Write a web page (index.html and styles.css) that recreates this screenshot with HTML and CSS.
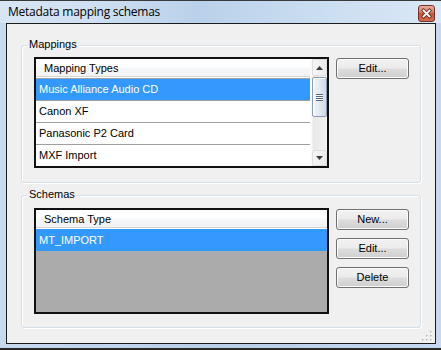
FILE: index.html
```html
<!DOCTYPE html>
<html>
<head>
<meta charset="utf-8">
<link rel="stylesheet" href="styles.css">
</head>
<body>
<div class="window">
  <div class="titlebar">
    <span class="title">Metadata mapping schemas</span>
    <svg class="close" width="17" height="17" viewBox="0 0 17 17">
      <defs>
        <linearGradient id="cg" x1="0" y1="0" x2="0" y2="1">
          <stop offset="0" stop-color="#eab0a2"/>
          <stop offset="0.45" stop-color="#d9785f"/>
          <stop offset="0.5" stop-color="#c9543a"/>
          <stop offset="1" stop-color="#d66e4f"/>
        </linearGradient>
      </defs>
      <rect x="0.5" y="0.5" width="16" height="16" rx="2.5" fill="url(#cg)" stroke="#70352a"/>
      <path d="M5.5 5.5 L11.5 11.5 M11.5 5.5 L5.5 11.5" stroke="#5c2b21" stroke-width="3.4" stroke-linecap="square"/>
      <path d="M5.5 5.5 L11.5 11.5 M11.5 5.5 L5.5 11.5" stroke="#ffffff" stroke-width="1.8" stroke-linecap="square"/>
    </svg>
  </div>
  <div class="frame">
    <div class="client">
      <div class="group g-map">
        <span class="group-label">Mappings</span>
        <div class="lv lv-map">
          <div class="lv-main">
            <div class="lv-head"><div class="lv-header">Mapping Types</div></div>
            <div class="row grid sel">Music Alliance Audio CD</div>
            <div class="row grid">Canon XF</div>
            <div class="row grid">Panasonic P2 Card</div>
            <div class="row grid">MXF Import</div>
          </div>
          <div class="vscroll">
            <div class="sb-btn sb-up">
              <svg width="7" height="4" viewBox="0 0 7 4"><polygon points="3.5,0 7,4 0,4" fill="#3b3b3b"/></svg>
            </div>
            <div class="sb-thumb">
              <div class="grip"></div>
            </div>
            <div class="sb-track"></div>
            <div class="sb-btn sb-down">
              <svg width="7" height="4" viewBox="0 0 7 4"><polygon points="0,0 7,0 3.5,4" fill="#3b3b3b"/></svg>
            </div>
          </div>
        </div>
        <div class="btn-col">
          <button class="btn">Edit...</button>
        </div>
      </div>
      <div class="group g-sch">
        <span class="group-label">Schemas</span>
        <div class="lv lv-sch">
          <div class="lv-main">
            <div class="lv-head"><div class="lv-header">Schema Type</div></div>
            <div class="row sel">MT_IMPORT</div>
          </div>
        </div>
        <div class="btn-col">
          <button class="btn">New...</button>
          <button class="btn">Edit...</button>
          <button class="btn">Delete</button>
        </div>
      </div>
      <svg class="grip-corner" width="10" height="10" viewBox="0 0 10 10">
        <g fill="#ffffff">
          <rect x="9" y="1" width="1" height="1"/>
          <rect x="5" y="5" width="1" height="1"/><rect x="9" y="5" width="1" height="1"/>
          <rect x="1" y="9" width="1" height="1"/><rect x="5" y="9" width="1" height="1"/><rect x="9" y="9" width="1" height="1"/>
        </g>
        <g fill="#b4b4b4">
          <rect x="8" y="0" width="1.5" height="1.5"/>
          <rect x="4" y="4" width="1.5" height="1.5"/><rect x="8" y="4" width="1.5" height="1.5"/>
          <rect x="0" y="8" width="1.5" height="1.5"/><rect x="4" y="8" width="1.5" height="1.5"/><rect x="8" y="8" width="1.5" height="1.5"/>
        </g>
      </svg>
    </div>
  </div>
</div>
</body>
</html>
```
FILE: styles.css
```css
body {
  margin: 0;
  background: #ffffff;
}

.window {
  width: 441px;
  height: 350px;
  box-sizing: border-box;
  display: flex;
  flex-direction: column;
  background: #bcd1e9;
  border-top: 1px solid #3a3a3a;
  border-bottom: 2px solid #2a2a2a;
}

.titlebar {
  height: 22px;
  flex: none;
  display: flex;
  align-items: flex-start;
  background: linear-gradient(to right, #d8e5f4 0%, #cfe0f2 20%, #b9d1ea 45%, #c3d8ee 60%, #dbe8f6 100%);
}

.title {
  font-family: "Open Sans", "Noto Sans", sans-serif;
  font-size: 12px;
  letter-spacing: -0.25px;
  line-height: 16px;
  margin: 3px 0 0 8px;
  color: #000000;
}

.close {
  display: block;
  margin: 4px 6px 0 auto;
}

.frame {
  flex: 1;
  display: flex;
  padding: 0 5px 4px 6px;
  background: linear-gradient(to right, #c8daee, #b9cfe8 50%, #c6d9ee);
}

.client {
  flex: 1;
  position: relative;
  border: 1px solid #1c1c1c;
  background: #f0f0f0;
  padding: 21px 0 0 14px;
  display: flex;
  flex-direction: column;
  gap: 12px;
  font-family: "Liberation Sans", Arial, sans-serif;
  font-size: 11px;
}

.group {
  position: relative;
  width: 400px;
  box-sizing: border-box;
  border: 1px solid #d5dfe5;
  border-radius: 3px;
  box-shadow: inset 1px 1px 0 #ffffff, 1px 1px 0 #ffffff;
  display: flex;
  align-items: flex-start;
  gap: 7px;
}

.g-map {
  height: 138px;
  padding: 11px 0 0 12px;
}

.g-sch {
  height: 133px;
  padding: 12px 0 0 12px;
}

.group-label {
  position: absolute;
  left: 5px;
  top: -8px;
  padding: 0 2px;
  line-height: 13px;
  background: #f0f0f0;
  color: #000000;
}

.lv {
  width: 295px;
  box-sizing: border-box;
  border: 2px solid #111111;
  display: flex;
  overflow: hidden;
}

.lv-map {
  height: 111px;
  background: #ffffff;
}

.lv-sch {
  height: 106px;
  background: #ababab;
}

.lv-main {
  flex: 1;
  min-width: 0;
  display: flex;
  flex-direction: column;
}

.lv-head {
  background: #ffffff;
  padding-bottom: 1px;
}

.lv-header {
  height: 18px;
  box-sizing: border-box;
  border-bottom: 1px solid #d5d5d5;
  background: linear-gradient(#ffffff 0%, #ffffff 45%, #f7f8fa 55%, #f1f2f4 100%);
  padding-left: 8px;
  line-height: 18px;
  color: #000000;
}

.row {
  height: 22px;
  box-sizing: border-box;
  padding-left: 3px;
  line-height: 21px;
  white-space: nowrap;
  background: #ffffff;
  color: #000000;
}

.row.grid {
  border-top: 1px solid #a0a0a0;
}

.lv-sch .row {
  line-height: 22px;
}

.row.sel {
  background: #3399ff;
  color: #ffffff;
}

.vscroll {
  width: 17px;
  flex: none;
  box-sizing: border-box;
  padding-left: 2px;
  display: flex;
  flex-direction: column;
  background: linear-gradient(to right, #fafafa 0, #fafafa 2px, #e8e8e8 3px, #f2f2f2 100%);
}

.sb-btn {
  box-sizing: border-box;
  border: 1px solid #dedede;
  border-radius: 2px;
  background: linear-gradient(to right, #f6f6f6, #ececec);
  display: flex;
  align-items: center;
  justify-content: center;
}

.sb-up {
  height: 17px;
}

.sb-down {
  height: 16px;
}

.sb-thumb {
  height: 40px;
  margin-top: 1px;
  box-sizing: border-box;
  border: 1px solid #8c9db2;
  border-radius: 2px;
  background: linear-gradient(to right, #f3f6fa 0%, #e3eaf2 45%, #cfdbe8 100%);
  box-shadow: inset 1px 1px 0 #ffffff;
  display: flex;
  align-items: center;
  justify-content: center;
}

.grip {
  width: 7px;
  height: 7px;
  background: repeating-linear-gradient(#5b6878 0, #5b6878 1px, #f4f7fa 1px, #f4f7fa 2px);
}

.sb-track {
  flex: 1;
}

.btn-col {
  display: flex;
  flex-direction: column;
  gap: 8px;
  padding-top: 1px;
}

.btn {
  width: 73px;
  height: 21px;
  box-sizing: border-box;
  margin: 0;
  padding: 0;
  border: 1px solid #707070;
  border-radius: 3px;
  background: linear-gradient(#f2f2f2 0%, #ebebeb 48%, #dddddd 52%, #cfcfcf 100%);
  box-shadow: inset 0 0 0 1px #fbfbfb;
  font-family: "Liberation Sans", Arial, sans-serif;
  font-size: 11px;
  line-height: 19px;
  color: #000000;
}

.grip-corner {
  position: absolute;
  right: 3px;
  bottom: 2px;
}
```
